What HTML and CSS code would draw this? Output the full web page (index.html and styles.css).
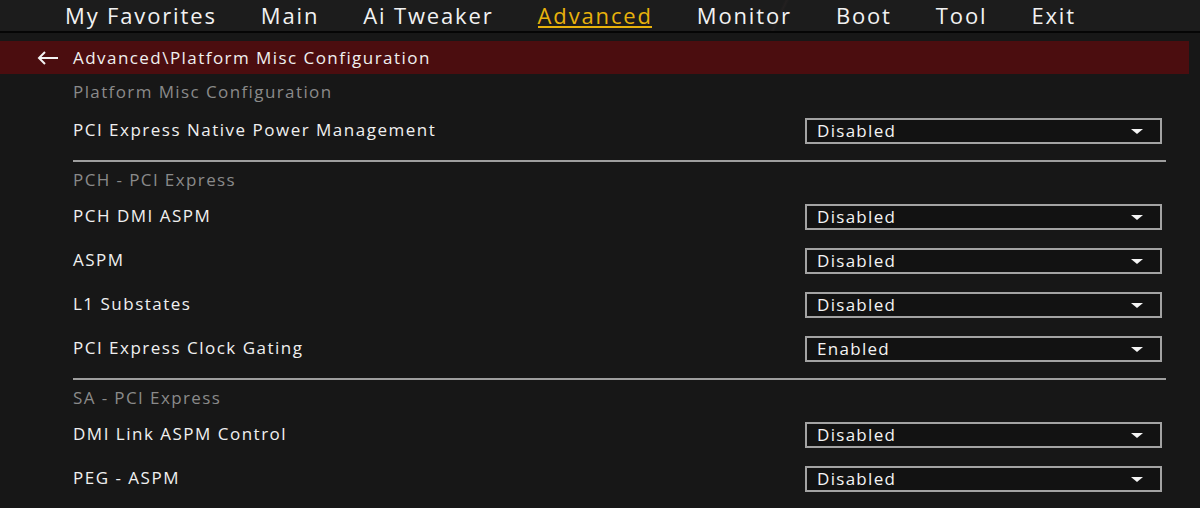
FILE: index.html
```html
<!DOCTYPE html>
<html lang="en">
<head>
<meta charset="utf-8">
<title>Advanced\Platform Misc Configuration</title>
<link rel="stylesheet" href="styles.css">
</head>
<body>
<nav class="tabs">
  <span class="tab">My Favorites</span>
  <span class="tab">Main</span>
  <span class="tab">Ai Tweaker</span>
  <span class="tab active">Advanced</span>
  <span class="tab">Monitor</span>
  <span class="tab">Boot</span>
  <span class="tab">Tool</span>
  <span class="tab">Exit</span>
</nav>
<div class="crumb">
  <svg class="back" width="22" height="14" viewBox="0 0 22 14"><path d="M21 7H2M8 1L2 7l6 6" fill="none" stroke="#f2f2f2" stroke-width="2"/></svg>
  <span>Advanced\Platform Misc Configuration</span>
</div>
<main class="content">
  <section class="group">
    <div class="ghead first">Platform Misc Configuration</div>
    <div class="row"><span class="label">PCI Express Native Power Management</span><div class="select"><span>Disabled</span><i class="caret"></i></div></div>
  </section>
  <section class="group">
    <div class="ghead">PCH - PCI Express</div>
    <div class="row"><span class="label">PCH DMI ASPM</span><div class="select"><span>Disabled</span><i class="caret"></i></div></div>
    <div class="row"><span class="label">ASPM</span><div class="select"><span>Disabled</span><i class="caret"></i></div></div>
    <div class="row"><span class="label">L1 Substates</span><div class="select"><span>Disabled</span><i class="caret"></i></div></div>
    <div class="row"><span class="label">PCI Express Clock Gating</span><div class="select"><span>Enabled</span><i class="caret"></i></div></div>
  </section>
  <section class="group last">
    <div class="ghead">SA - PCI Express</div>
    <div class="row"><span class="label">DMI Link ASPM Control</span><div class="select"><span>Disabled</span><i class="caret"></i></div></div>
    <div class="row"><span class="label">PEG - ASPM</span><div class="select"><span>Disabled</span><i class="caret"></i></div></div>
  </section>
</main>
</body>
</html>
```
FILE: styles.css
```css
* { box-sizing: border-box; }
html, body { margin: 0; padding: 0; }
body {
  width: 1200px;
  height: 508px;
  overflow: hidden;
  background: #171717;
  font-family: "Open Sans", "DejaVu Sans", sans-serif;
  color: #ececec;
}
.tabs {
  height: 33px;
  display: flex;
  align-items: flex-start;
  gap: 44px;
  padding-left: 65px;
  background: linear-gradient(115deg, #1c1c1c 0%, #1c1c1c 64.6%, #232020 64.8%, #1c1c1c 65%, #1c1c1c 100%);
  border-bottom: 2px solid #050505;
}
.tab {
  font-size: 22px;
  line-height: 31px;
  color: #f2f2f2;
  letter-spacing: 1.85px;
  position: relative;
}
.tab.active { color: #e8b20c; }
.tab.active::after {
  content: "";
  position: absolute;
  left: 0; right: 1px; top: 26px;
  height: 2px;
  background: #e8b20c;
}
.crumb {
  margin-top: 8px;
  width: 1189px;
  height: 33px;
  background: #4b0d0f;
  display: flex;
  align-items: center;
  padding-left: 37px;
  gap: 14px;
  font-size: 17px;
  letter-spacing: 1.45px;
  color: #f0f0f0;
}
.back { display: block; }
.content {
  padding-left: 73px;
  width: 1166px;
}
.group { border-bottom: 2px solid #9e9e9e; padding-bottom: 8px; }
.group.last { border-bottom: 0; }
.ghead {
  font-size: 17px;
  line-height: 26px;
  padding-top: 5px;
  height: 32px;
  color: #8a8a8a;
  letter-spacing: 1.4px;
}
.ghead.first { padding-top: 5px; height: 34px; }
.row {
  height: 44px;
  display: flex;
  align-items: center;
  justify-content: space-between;
  padding-right: 4px;
}
.label {
  font-size: 17px;
  letter-spacing: 1.5px;
  color: #f0f0f0;
  margin-top: -2px;
}
.select {
  width: 357px;
  height: 26px;
  border: 2px solid #a3a3a3;
  background: #121212;
  display: flex;
  align-items: center;
  justify-content: space-between;
  padding: 0 17px 0 10px;
  font-size: 17px;
  letter-spacing: 1.3px;
  color: #f4f4f4;
  margin-top: 1px;
}
.caret {
  width: 0; height: 0;
  border-left: 6px solid transparent;
  border-right: 6px solid transparent;
  border-top: 5px solid #f4f4f4;
  margin-top: 1px;
}
```
